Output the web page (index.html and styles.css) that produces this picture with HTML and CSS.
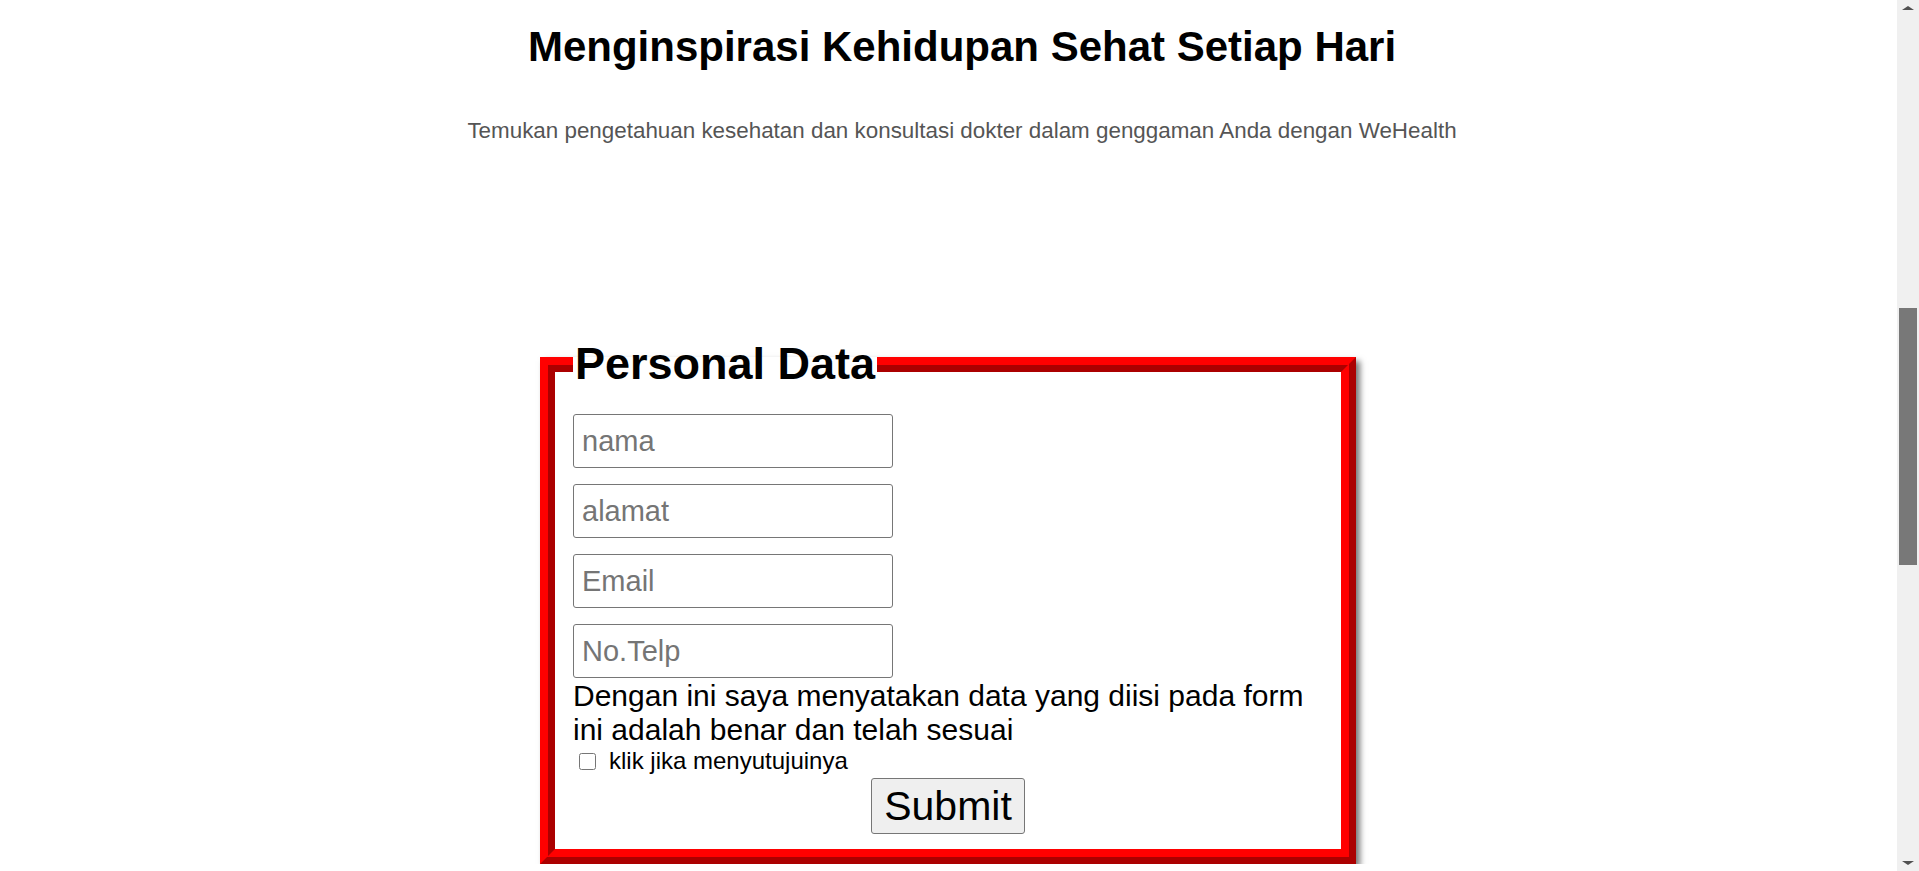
FILE: index.html
```html
<!DOCTYPE html>
<html lang="id">
<head>
<meta charset="utf-8">
<title>WeHealth</title>
<link rel="stylesheet" href="styles.css">
</head>
<body>
<div class="page">
  <section class="intro">
    <h1 class="intro-title">Menginspirasi Kehidupan Sehat Setiap Hari</h1>
    <p class="intro-text">Temukan pengetahuan kesehatan dan konsultasi dokter dalam genggaman Anda dengan WeHealth</p>
  </section>
  <section class="form-section">
    <form class="data-form">
      <fieldset class="data-fieldset">
        <legend class="data-legend">Personal Data</legend>
        <div class="fields">
          <input class="field" type="text" placeholder="nama">
          <input class="field" type="text" placeholder="alamat">
          <input class="field" type="email" placeholder="Email">
          <input class="field" type="tel" placeholder="No.Telp">
          <p class="statement">Dengan ini saya menyatakan data yang diisi pada form ini adalah benar dan telah sesuai</p>
          <label class="agree"><input class="agree-box" type="checkbox"><span>klik jika menyutujuinya</span></label>
          <button class="submit" type="button">Submit</button>
        </div>
      </fieldset>
    </form>
  </section>
</div>
<div class="scrollbar" aria-hidden="true">
  <span class="scroll-arrow scroll-arrow-up"></span>
  <div class="scroll-track"><span class="scroll-thumb"></span></div>
  <span class="scroll-arrow scroll-arrow-down"></span>
</div>
</body>
</html>
```
FILE: styles.css
```css
html, body {
  margin: 0;
  padding: 0;
}
html {
  overflow: hidden;
}
body {
  background: #fff;
  font-family: "Liberation Sans", Arial, sans-serif;
  color: #000;
}
.page {
  padding-right: 22px;
}
.intro {
  padding-left: 27px;
  text-align: center;
}
.intro-title {
  margin: 0;
  padding-top: 23px;
  font-size: 42px;
  line-height: 48px;
  font-weight: 700;
}
.intro-text {
  margin: 47px 0 0;
  font-size: 22.4px;
  line-height: 26px;
  color: #555;
}
.form-section {
  margin-top: 194px;
  padding-right: 1px;
}
.data-form {
  width: 816px;
  margin: 0 auto;
}
.data-fieldset {
  margin: 0;
  padding: 24px 18px 15px;
  border: 15px ridge #ff0000;
  box-shadow: 4px 4px 6px #777;
  font-size: 24px;
}
.data-legend {
  padding: 0 2px;
  font-size: 45px;
  line-height: 52px;
  font-weight: 700;
}
.fields {
  display: flex;
  flex-direction: column;
  align-items: flex-start;
}
.field {
  box-sizing: border-box;
  width: 320px;
  height: 54px;
  margin: 0 0 16px;
  padding: 0 8px;
  border: 1px solid #767676;
  border-radius: 3px;
  font-family: "Liberation Sans", Arial, sans-serif;
  font-size: 29px;
}
.field:last-of-type {
  margin-bottom: 0;
}
.field::placeholder {
  color: #757575;
}
.statement {
  margin: 1px 0 0;
  font-size: 30px;
  line-height: 34px;
}
.agree {
  display: flex;
  align-items: center;
  height: 28px;
  font-size: 24px;
}
.agree-box {
  width: 17px;
  height: 17px;
  margin: 0 13px 0 6px;
}
.submit {
  align-self: center;
  box-sizing: border-box;
  width: 154px;
  height: 56px;
  margin-top: 3px;
  padding: 0;
  border: 1px solid #767676;
  border-radius: 3px;
  background: #efefef;
  font-family: "Liberation Sans", Arial, sans-serif;
  font-size: 41px;
  color: #000;
}

/* browser scrollbar (page is scrolled part-way down) */
.scrollbar {
  position: fixed;
  top: 0;
  right: 0;
  bottom: 0;
  width: 22px;
  display: flex;
  flex-direction: column;
  align-items: center;
  background: #f0f0f0;
}
.scroll-arrow {
  flex: none;
  width: 0;
  height: 0;
  border-left: 6px solid transparent;
  border-right: 6px solid transparent;
}
.scroll-arrow-up {
  margin: 6px 0 11px;
  border-bottom: 4px solid #505050;
}
.scroll-arrow-down {
  margin: 11px 0 6px;
  border-top: 4px solid #505050;
}
.scroll-track {
  flex: 1;
  align-self: stretch;
  display: flex;
  flex-direction: column;
  padding: 0 2px;
}
.scroll-thumb {
  display: block;
  height: 257px;
  margin-top: 287px;
  background: #787878;
}
```
